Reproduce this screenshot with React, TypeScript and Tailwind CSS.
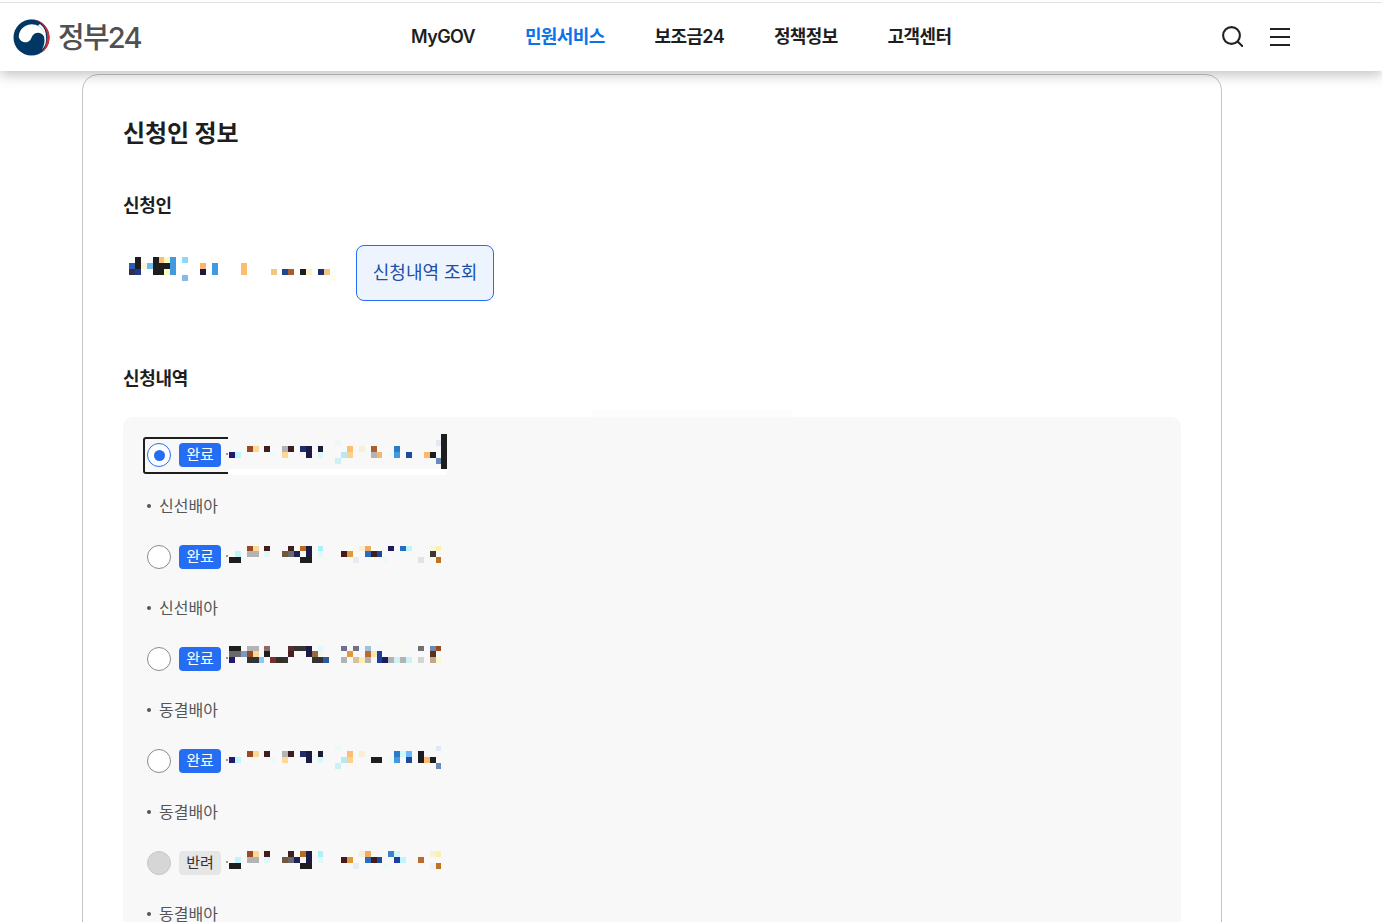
import React from "react";

const FONT = { fontFamily: 'Inter, "Noto Sans CJK KR", sans-serif' };

function colX(origin: number, k: number) {
  return Math.round(origin + 5.9 * k);
}

type MosaicRow = { y: number; h: number; cells: string };

function Cells({ origin, baseX, baseY, rows }: { origin: number; baseX: number; baseY: number; rows: MosaicRow[] }) {
  return (
    <>
      {rows.flatMap((r, i) =>
        r.cells.split(",").map((c, j) => {
          const [k, color] = c.trim().split(" ");
          const n = Number(k);
          return (
            <rect
              key={`${i}-${j}`}
              x={colX(origin, n) - baseX}
              y={r.y - baseY}
              width={colX(origin, n + 1) - colX(origin, n)}
              height={r.h}
              fill={`#${color}`}
            />
          );
        })
      )}
    </>
  );
}

const APPLICANT: MosaicRow[] = [
  { y: 257, h: 6, cells: "1 1e1e1e,4 1e1e1e,5 fbbd78,6 fafac0,7 4199e0,9 8cd8fa" },
  { y: 263, h: 6, cells: "0 2a5cb0,1 1e1e1e,2 f8f8d8,3 6ec0f0,4 1e1e1e,5 1e1e1e,6 1e1e1e,7 4199e0,12 fbb46f,14 4199e0,19 fdbd6e" },
  { y: 269, h: 6, cells: "0 30304e,1 1e3a8a,4 1e1e1e,5 1e1e1e,6 fafac0,7 4199e0,12 1a1a3e,14 4199e0,19 fdbd6e,24 f0c880,26 1e4a8a,27 a85a30,29 1e1e1e,30 fdf1c8,32 1e2e6e,33 f0c880" },
  { y: 275, h: 6, cells: "9 8ab8e8,34 fcfce8" },
];

type Item = { top: number; rows: MosaicRow[]; label: string; status: "done" | "reject"; state: "on" | "off" | "disabled" };

const ITEMS: Item[] = [
  {
    top: 425,
    label: "신선배아",
    status: "done",
    state: "on",
    rows: [
      { y: 440, h: 6, cells: "18 f0f8f5,35 e3e9f2" },
      { y: 446, h: 6, cells: "3 9a4a20,4 fbd896,6 3f1f1e,9 b3b3b3,10 3b1f1f,12 1d2d6e,13 1a1c46,15 1c1d36,20 fbbd78,22 f8efd6,24 ab5f2a,28 2a7cc8" },
      { y: 452, h: 6, cells: "0 1e1b6e,1 bdf7fb,7 eefaf8,9 fbd896,13 1a1c46,15 d9f8fa,19 b8e8f5,20 fcd188,24 b3b3b3,25 fbb46f,27 eefaf8,28 4199e0,30 1e4a9e,33 fdb96b,34 1e1e1e" },
      { y: 458, h: 6, cells: "18 ccf1f5,35 6b8cba" },
    ],
  },
  {
    top: 527,
    label: "신선배아",
    status: "done",
    state: "off",
    rows: [
      { y: 546, h: 5, cells: "3 9a4a20,4 fbd896,6 3f1f1e,10 3f1f1e,12 bd6a1f,13 1a1c46,15 aef0f8,20 fafaf0,22 f8efd6,23 efac62,27 1a1c5e,29 2a6cc0,30 bdf7fb,34 f8f5e0,35 f8f1b0" },
      { y: 551, h: 6, cells: "1 bdf7fb,3 b3b3b3,4 b3b3b3,6 dff8fa,9 6f5a3f,10 6a6a6a,11 1d2250,13 1a1c46,15 dff8fa,19 451a1a,20 e09a3c,23 2a6cc0,24 3f1f1e,25 1e4a9e,34 3a3a30" },
      { y: 557, h: 6, cells: "0 1e1e1e,1 1e1e1e,12 1e1e1e,13 1e1e1e,21 e6ecf4,26 eefaf8,32 e3e3e3,35 bd7320" },
    ],
  },
  {
    top: 629,
    label: "동결배아",
    status: "done",
    state: "off",
    rows: [
      { y: 646, h: 5, cells: "0 1e1e1e,1 1e1e1e,3 b3b3b3,4 b3b3b3,6 8f6a6a,10 5a2a2e,11 333333,12 333333,13 1a1c46,15 dff8fa,19 70708a,21 70708a,23 9fc0de,25 f0f9fa,27 f8f8f0,29 f8f8f0,32 707070,34 7088b0,35 9a4a20" },
      { y: 651, h: 6, cells: "0 6a6a6a,1 6a6a6a,2 7a9abf,3 9a4a20,4 fbd896,6 1e1e1e,10 45201f,13 1a1c46,14 966a40,15 f5f5e8,20 e09a3c,23 bd6a2a,24 f8e8b0,25 1e3e9e,34 5a3018" },
      { y: 657, h: 6, cells: "0 1e1b6e,3 333333,4 333333,5 8cc8fa,7 7a2a30,8 33301f,9 333333,14 333333,15 333333,16 2a5aa0,19 b3b3b3,21 d8c09c,22 f8efb0,23 b3b3b3,25 1e3e9e,26 1a1c5e,27 b3b3b3,28 cff2f8,29 b3b3b3,30 cff2f8,32 d0d8d0,34 c0a890,35 f8f8c8" },
    ],
  },
  {
    top: 731,
    label: "동결배아",
    status: "done",
    state: "off",
    rows: [
      { y: 746, h: 5, cells: "18 f0f8f5,35 e3e9f2" },
      { y: 751, h: 6, cells: "3 9a4a20,4 fbd896,6 3f1f1e,9 b3b3b3,10 3b1f1f,12 1d2d6e,13 1a1c46,15 1c1d36,20 fbbd78,22 f8efd6,28 2a7cc8,29 d0f8fa,30 6ab8f8,32 1e1e1e" },
      { y: 757, h: 6, cells: "0 1e1b6e,1 bdf7fb,7 eefaf8,9 fbd896,13 1a1c46,15 d9f8fa,19 b8e8f5,20 fcd188,24 1e1e1e,25 1e1e1e,27 eefaf8,28 4199e0,30 1e4a9e,32 1e1e1e,33 fdb96b,34 1e1e1e" },
      { y: 763, h: 6, cells: "18 ccf1f5,35 6b8cba" },
    ],
  },
  {
    top: 833,
    label: "동결배아",
    status: "reject",
    state: "disabled",
    rows: [
      { y: 851, h: 6, cells: "3 9a4a20,4 fbd896,6 3f1f1e,10 3f1f1e,12 bd6a1f,13 1a1c46,15 aef0f8,20 fafaf0,22 f8efd6,23 efac62,27 3f7ec8,28 d0f8fa,34 f8f0d8,35 f8f1b0" },
      { y: 857, h: 6, cells: "1 bdf7fb,3 b3b3b3,4 b3b3b3,6 dff8fa,9 6f5a3f,10 6a6a6a,11 1d2250,13 1a1c46,15 dff8fa,19 451a1a,20 e09a3c,23 2a6cc0,24 3f1f1e,25 1e4a9e,28 1e3e9e,29 bdf7fb,32 bd6a2a" },
      { y: 863, h: 6, cells: "0 1e1e1e,1 1e1e1e,12 1e1e1e,13 1e1e1e,21 e6ecf4,26 eefaf8,34 eef2f8,35 bd7320" },
    ],
  },
];

function Logo() {
  return (
    <svg width="38" height="37" viewBox="0 0 38 37" className="shrink-0">
      <circle cx="18.5" cy="18.5" r="18" fill="#003764" />
      <path d="M14 1 A18 18 0 0 1 36.5 18.5 A18 18 0 0 1 27 34.5 A20 20 0 0 0 33.8 18.5 A16 16 0 0 0 14 1 Z" fill="#cd2e3a" />
      <g transform="rotate(16 18.5 18.5)">
        <path d="M5.5 18.5 A13 13 0 0 1 32 18.5 A6.7 6.7 0 0 0 18.6 18.5 A6.55 6.55 0 0 1 5.5 18.5 Z" fill="#ffffff" />
      </g>
      <path d="M27 5 A16 16 0 0 1 33 18 A15 15 0 0 1 29 30.5 A20 20 0 0 0 31.4 18.5 A14 14 0 0 0 25 6.5 Z" fill="#ffffff" />
    </svg>
  );
}

function Header() {
  return (
    <header className="relative z-10 h-[71px] shrink-0 bg-white pt-[2px] shadow-[0_4px_12px_rgba(0,0,0,0.24)]">
      <div className="flex h-[69px] items-center border-t border-[#e2e2e2] pl-[13px] pr-[92px]">
        <div className="flex w-[398px] items-center gap-[7px]">
          <Logo />
          <span className="text-[29px] font-medium leading-none tracking-[-1.8px] text-[#505050]">정부24</span>
        </div>
        <nav className="flex items-center gap-[49.8px] pb-[2px] text-[18px] font-semibold tracking-[-0.6px] text-[#1e1e1e]">
          <span>MyGOV</span>
          <span className="text-[#0b72e7]">민원서비스</span>
          <span>보조금24</span>
          <span>정책정보</span>
          <span>고객센터</span>
        </nav>
        <div className="ml-auto flex items-center gap-[27px]">
          <svg width="23" height="24" viewBox="0 0 23 24" fill="none" stroke="#222222" strokeWidth="2.1" strokeLinecap="round">
            <circle cx="11.5" cy="10.5" r="8.4" />
            <path d="M17.6 16.5 L22.2 21" />
          </svg>
          <div className="flex w-[20px] flex-col gap-[6px]">
            <div className="h-[2px] bg-[#222222]" />
            <div className="h-[2px] bg-[#222222]" />
            <div className="h-[2px] bg-[#222222]" />
          </div>
        </div>
      </div>
    </header>
  );
}

function Radio({ state }: { state: Item["state"] }) {
  if (state === "on") {
    return (
      <span className="relative flex size-6 shrink-0 items-center justify-center rounded-full border border-[#256ef4] bg-white">
        <span className="size-[11px] rounded-full bg-[#256ef4]" />
      </span>
    );
  }
  if (state === "disabled") {
    return <span className="relative block size-6 shrink-0 rounded-full border border-[#c8c8c8] bg-[#d6d6d6]" />;
  }
  return <span className="relative block size-6 shrink-0 rounded-full border border-[#8a8a8a] bg-white" />;
}

function ItemRow({ item }: { item: Item }) {
  const focused = item.state === "on";
  return (
    <div className="h-[102px]">
      <div className="relative flex h-6 items-center">
        {focused && <div className="absolute -left-[4px] -top-[6px] h-[37px] w-[100px] rounded-[3px] border-2 border-[#1e1e1e]" />}
        <Radio state={item.state} />
        {item.status === "done" ? (
          <span className="relative ml-2 flex h-6 w-[42px] shrink-0 items-center justify-center rounded-[4px] bg-[#256ef4] text-[15px] text-white">완료</span>
        ) : (
          <span className="relative ml-2 flex h-6 w-[42px] shrink-0 items-center justify-center rounded-[4px] bg-[#e6e6e6] text-[15px] text-[#333333]">반려</span>
        )}
        <svg width="221" height="60" viewBox="0 0 221 60" shapeRendering="crispEdges" className="relative -my-[18px] ml-[5px] shrink-0">
          {focused && (
            <>
              <rect x="2" y="0" width="219" height="44" fill="#f8f8f8" />
              <rect x="2" y="44" width="219" height="6" fill="#ffffff" />
              <rect x="215" y="9" width="6" height="35" fill="#1e1e1e" />
            </>
          )}
          <rect x="0" y="28" width="2" height="2" fill="#a89078" />
          <Cells origin={229} baseX={226} baseY={item.top} rows={item.rows} />
        </svg>
      </div>
      <div className="mt-[27px] flex h-6 items-center text-[16px] text-[#555555]">
        <span className="size-[4px] rounded-full bg-[#555555]" />
        <span className="ml-[8px]">{item.label}</span>
      </div>
    </div>
  );
}

export default function App() {
  return (
    <div className="flex h-[922px] w-[1382px] flex-col overflow-hidden bg-white" style={FONT}>
      <Header />
      <main className="pl-[82px] pt-[3px]">
        <section className="h-[900px] w-[1140px] rounded-[16px] border border-[#c4c4c4] px-[40px] pt-[43px]">
          <h2 className="text-[24px] font-bold leading-[32px] tracking-[-0.1px] text-[#1e1e1e]">신청인 정보</h2>
          <h3 className="mt-[44px] text-[18px] font-semibold leading-[24px] tracking-[-0.3px] text-[#1e1e1e]">신청인</h3>
          <div className="mt-[27px] flex items-center">
            <svg width="233" height="56" viewBox="0 0 233 56" shapeRendering="crispEdges" className="shrink-0">
              <Cells origin={129} baseX={123} baseY={245} rows={APPLICANT} />
            </svg>
            <button className="flex h-[56px] w-[138px] items-center justify-center rounded-[8px] border border-[#256ef4] bg-[#eef4fe] pb-[2px] text-[18px] text-[#1d4fa8]">
              신청내역 조회
            </button>
          </div>
          <h3 className="mt-[66px] text-[18px] font-semibold leading-[24px] tracking-[-0.3px] text-[#1e1e1e]">신청내역</h3>
          <div className="relative mt-[26px] rounded-[10px] bg-[#f8f8f8] pl-[24px] pt-[26px]">
            <div className="absolute -top-[7px] left-[469px] h-[7px] w-[200px] bg-[#fcfcfc]" />
            {ITEMS.map((item) => (
              <ItemRow key={item.top} item={item} />
            ))}
          </div>
        </section>
      </main>
    </div>
  );
}
